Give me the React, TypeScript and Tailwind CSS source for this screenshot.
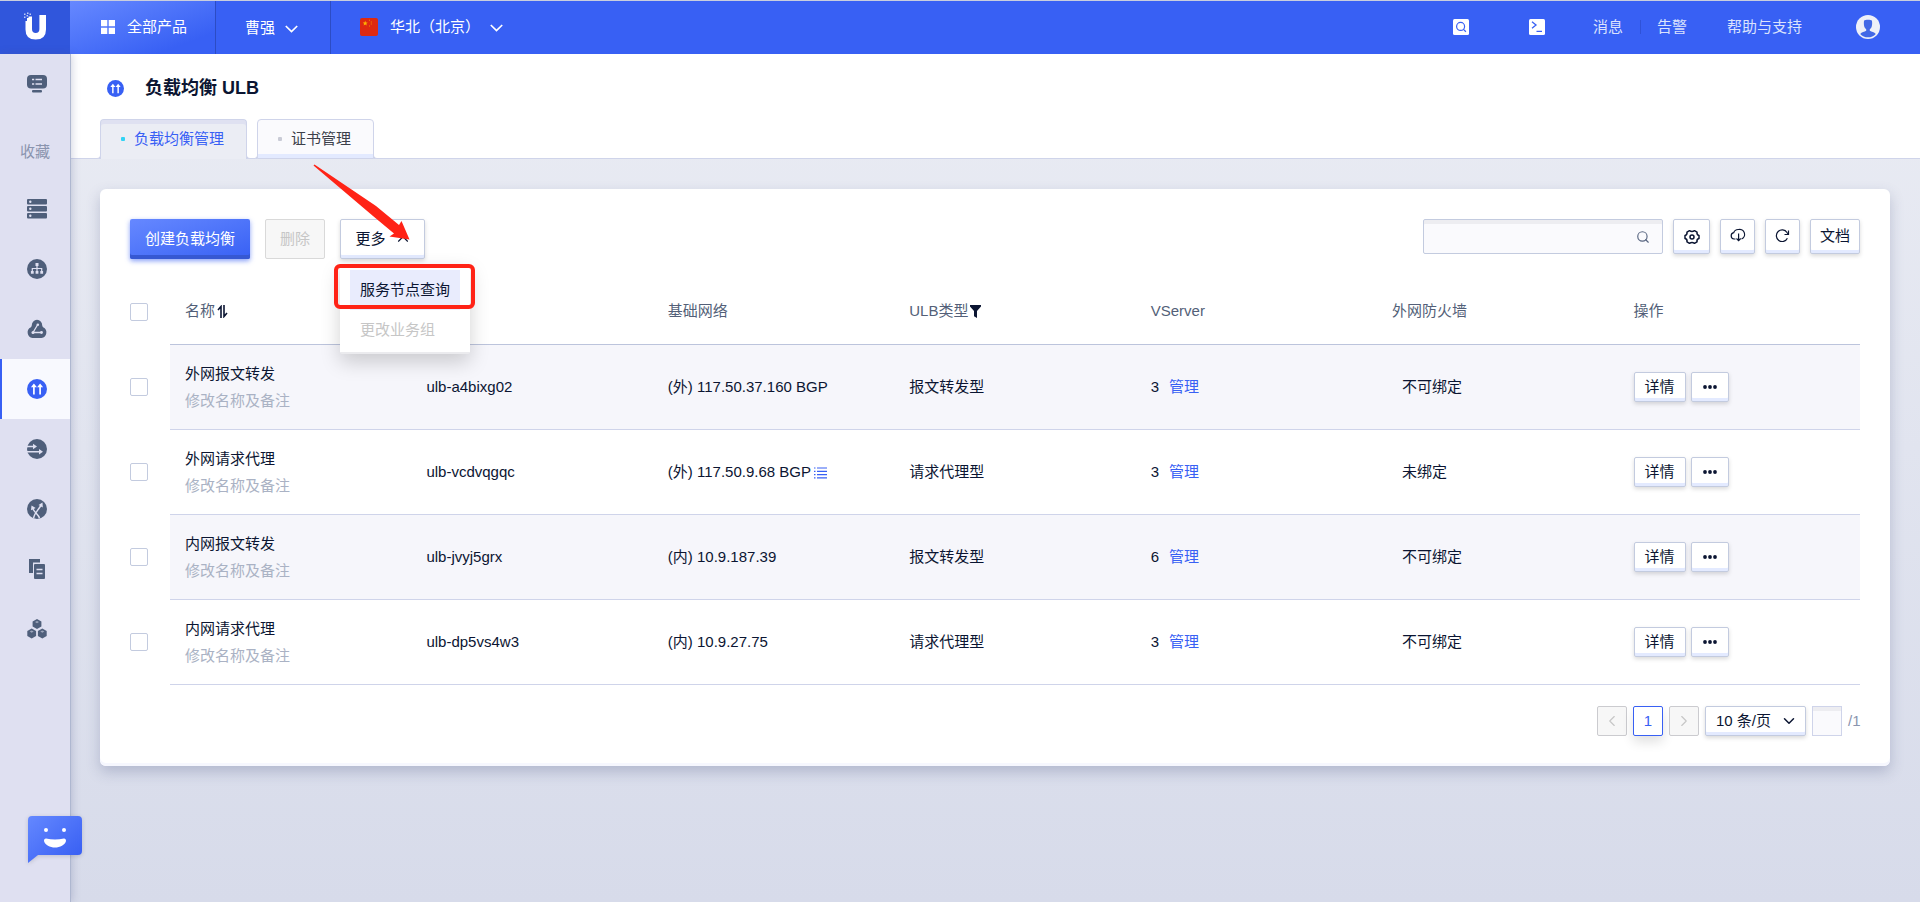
import { useState } from 'react';
import type { ReactNode } from 'react';
import { ChevronDown, ChevronLeft, ChevronRight, ChevronUp, Search } from 'lucide-react';
import clsx from 'clsx';

type Row = {
  id: string;
  name: string;
  network: string;
  hasList?: boolean;
  type: string;
  vserver: number;
  firewall: string;
};

const rows: Row[] = [
  { id: 'ulb-a4bixg02', name: '外网报文转发', network: '(外) 117.50.37.160 BGP', type: '报文转发型', vserver: 3, firewall: '不可绑定' },
  { id: 'ulb-vcdvqgqc', name: '外网请求代理', network: '(外) 117.50.9.68 BGP', hasList: true, type: '请求代理型', vserver: 3, firewall: '未绑定' },
  { id: 'ulb-jvyj5grx', name: '内网报文转发', network: '(内) 10.9.187.39', type: '报文转发型', vserver: 6, firewall: '不可绑定' },
  { id: 'ulb-dp5vs4w3', name: '内网请求代理', network: '(内) 10.9.27.75', type: '请求代理型', vserver: 3, firewall: '不可绑定' },
];

export default function App() {
  return (
    <div className="flex min-h-screen flex-col bg-linear-to-b from-[#ebedf4] to-[#d7dbea] font-['Liberation_Sans','Noto_Sans_CJK_SC',sans-serif] text-[15px] leading-[22px] text-[#0b1532]">
      <TopBar />
      <div className="flex flex-1">
        <Sidebar />
        <main className="min-w-0 flex-1">
          <PageHeader />
          <section className="mx-[30px] mt-[30px] mb-8 rounded-md bg-white p-[30px] shadow-[inset_0_-3px_0_#f6f7fe,0_6px_14px_rgba(60,70,120,0.25)]">
            <Toolbar />
            <UlbTable />
            <Pagination />
          </section>
        </main>
      </div>
    </div>
  );
}

/* ---------- top bar ---------- */

function TopBar() {
  return (
    <header className="flex h-[54px] border-t border-[#c9cede] bg-[#3860f4] text-white">
      <a href="#home" aria-label="首页" className="flex w-[70px] items-center justify-center bg-[#3056dc] pb-1">
        <Logo />
      </a>
      <button className="flex w-[146px] items-center gap-3 border-r border-[#2c4cc4] bg-linear-to-br from-[#6688ff] to-[#3860f4] to-80% pb-0.5 pl-[31px]">
        <svg width="14" height="14" viewBox="0 0 14 14" fill="currentColor">
          <path d="M0 0h6.3v6.3H0zM7.7 0H14v6.3H7.7zM0 7.7h6.3V14H0zM7.7 7.7H14V14H7.7z" />
        </svg>
        全部产品
      </button>
      <button className="flex w-[115px] items-center gap-2.5 border-r border-[#2c4cc4] pl-[29px]">
        曹强
        <Caret />
      </button>
      <button className="flex items-center pb-0.5 pl-[29px]">
        <Flag />
        <span className="mr-2.5 ml-3">华北（北京）</span>
        <Caret />
      </button>

      <div className="ml-auto flex items-center pr-10 pb-0.5">
        <button aria-label="搜索" className="mr-[60px]">
          <svg width="16" height="16" viewBox="0 0 16 16">
            <rect width="16" height="16" rx="1.5" fill="#fff" />
            <circle cx="7.6" cy="7.4" r="4" fill="none" stroke="#3860f4" strokeWidth="1.2" />
            <path d="M10.5 10.4l2.4 2.3" stroke="#3860f4" strokeWidth="1.2" />
          </svg>
        </button>
        <button aria-label="终端" className="mr-12">
          <svg width="16" height="16" viewBox="0 0 16 16">
            <rect width="16" height="16" rx="1.5" fill="#fff" />
            <path d="M3 2.8l4 3.2-4 3.2M7.5 12.3h5.500" fill="none" stroke="#3860f4" strokeWidth="1.3" />
          </svg>
        </button>
        <nav className="flex items-center text-[#dbe2fd]">
          <a href="#messages" className="pr-[17px]">消息</a>
          <span className="h-3.5 w-px bg-[#2f52d8]" />
          <a href="#alarms" className="pl-4">告警</a>
          <a href="#help" className="ml-10">帮助与支持</a>
        </nav>
        <button aria-label="账号" className="ml-[54px]">
          <svg width="24" height="24" viewBox="0 0 24 24">
            <circle cx="12" cy="12" r="12" fill="#eef0f8" />
            <path d="M8.2 5.6C9 4.600 15 4.600 15.800 5.600c.5.600.5 5.200-.3 6.600-.5.900-1.300 1.600-1.700 2.100v1.500c1.800 1 4.500 1.400 6 3.100a10.600 10.600 0 0 1-15.600 0c1.500-1.700 4.200-2.100 6-3.100v-1.500c-.4-.5-1.200-1.200-1.700-2.100-.8-1.400-.8-6-.3-6.600z" fill="#4268e6" />
          </svg>
        </button>
      </div>
    </header>
  );
}

function Caret() {
  return (
    <svg width="13" height="8" viewBox="0 0 13 8" fill="none" stroke="currentColor" strokeWidth="1.700" className="mt-0.5">
      <path d="M.8 1l5.700 5.500L12.200 1" />
    </svg>
  );
}

function Logo() {
  return (
    <svg width="24" height="28" viewBox="0 0 24 28" fill="#fff">
      <path d="M2.500 9H4V6h1.500V4.500H9V17q0 4 3.700 4t3.700-4V3H23v14.500q0 10-10.300 10T2.500 17.500z" />
      <path d="M1 1.500h1.500V3H1zM4 .5h1.500V2H4zM1 4.500h1.500V6H1zM3.500 3H5v1.500H3.500zM6.500 1.500H8V3H6.500z" opacity=".7" />
    </svg>
  );
}

function Flag() {
  return (
    <svg width="18" height="18" viewBox="0 0 18 18">
      <rect width="18" height="18" rx="2" fill="#de2910" />
      <path d="M5.200 2.800l.7 1.700 1.800.1-1.400 1.100.5 1.800-1.600-1-1.600 1 .5-1.800-1.400-1.100 1.800-.1z" fill="#ffb400" />
      <path d="M9 1.800h1v1H9zM10.800 3.400h1v1h-1zM10.800 5.600h1v1h-1zM9 7.400h1v1H9z" fill="#f28a00" />
    </svg>
  );
}

/* ---------- sidebar ---------- */

function Sidebar() {
  return (
    <aside className="relative z-10 w-[70px] shrink-0 bg-[#dfe0f1] text-[#4f5f7b] shadow-[1px_0_0_#aeb7d0,2px_0_8px_rgba(70,80,130,0.25)]">
      <SideItem label="控制台"><ConsoleIcon /></SideItem>
      <p className="flex h-[65px] items-center justify-center pt-2.5 text-[#8a94ae]">收藏</p>
      <SideItem label="云主机"><ServerIcon /></SideItem>
      <SideItem label="私有网络"><TreeIcon /></SideItem>
      <SideItem label="基础网络"><TriangleIcon /></SideItem>
      <SideItem label="负载均衡" active><BalanceIcon size={20} /></SideItem>
      <SideItem label="弹性网络"><ForwardIcon /></SideItem>
      <SideItem label="流量分发"><SplitIcon /></SideItem>
      <SideItem label="镜像"><CopyIcon /></SideItem>
      <SideItem label="集群"><CubesIcon /></SideItem>

      <button aria-label="在线客服" className="absolute top-[761px] left-[28px]">
        <svg width="54" height="49" viewBox="0 0 54 49" className="drop-shadow-sm">
          <defs>
            <linearGradient id="chat" x1="0" y1="0" x2="1" y2="1">
              <stop offset="0" stopColor="#6488ff" />
              <stop offset="1" stopColor="#355cf2" />
            </linearGradient>
          </defs>
          <path d="M4 1h46a4 4 0 0 1 4 4v31a4 4 0 0 1-4 4H10L0 48V5a4 4 0 0 1 4-4z" fill="url(#chat)" />
          <circle cx="18" cy="15" r="2" fill="#fff" />
          <circle cx="36" cy="15" r="2" fill="#fff" />
          <path d="M18 23.500q9 2 18 0c1.500 0 2 1 2 2.500-1 4-6 6.500-11 6.500S17 30 16 26c0-1.500.5-2.500 2-2.500z" fill="#fff" />
        </svg>
      </button>
    </aside>
  );
}

function SideItem({ label, active, children }: { label: string; active?: boolean; children: ReactNode }) {
  return (
    <a href="#product" aria-label={label}
      className={clsx('flex h-[60px] items-center justify-center border-l-2 pl-0.5', active ? 'border-[#3860f4] bg-[#f8f9fe] text-[#3860f4]' : 'border-transparent')}>
      {children}
    </a>
  );
}

function ConsoleIcon() {
  return (
    <svg width="20" height="18" viewBox="0 0 20 18" fill="currentColor">
      <rect width="20" height="13.500" rx="4" />
      <rect x="5" y="15" width="10" height="2.500" rx="1" />
      <path d="M5 4.500h2.200M5 9h2.200M8.500 4.500H15M8.500 9H15" stroke="#dfe0f1" strokeWidth="1.600" />
    </svg>
  );
}

function ServerIcon() {
  return (
    <svg width="20" height="20" viewBox="0 0 20 20">
      {[0, 7, 14].map((y) => (
        <g key={y}>
          <rect y={y} width="20" height="5.500" rx="1" fill="currentColor" />
          <circle cx="3.300" cy={y + 2.700} r="1.200" fill="#dfe0f1" />
        </g>
      ))}
    </svg>
  );
}

function TreeIcon() {
  return (
    <svg width="20" height="20" viewBox="0 0 20 20">
      <circle cx="10" cy="10" r="10" fill="currentColor" />
      <path d="M10 6v7M5.300 13V9.500h9.400V13" fill="none" stroke="#dfe0f1" strokeWidth="1.200" />
      <path d="M8.500 4h3v3h-3zM3.900 12h2.800v2.800H3.900zM8.600 12h2.800v2.800H8.600zM13.300 12h2.800v2.800h-2.800z" fill="#dfe0f1" />
    </svg>
  );
}

function TriangleIcon() {
  return (
    <svg width="20" height="20" viewBox="0 0 20 20">
      <path d="M10 .8a5.300 5.300 0 0 1 5.200 5.400c0 .8.300 1.400.9 2A5.700 5.700 0 0 1 14.500 19h-9A5.700 5.700 0 0 1 3.900 8.200c.6-.6.9-1.200.9-2A5.300 5.300 0 0 1 10 .8z" fill="currentColor" />
      <path d="M10.800 5.500L6 13.500h8.500" fill="none" stroke="#dfe0f1" strokeWidth="1.300" />
      <circle cx="10.800" cy="5.800" r="1.300" fill="#dfe0f1" />
      <circle cx="6" cy="13.500" r="1.500" fill="#dfe0f1" />
      <circle cx="14.500" cy="13.500" r="1.400" fill="#dfe0f1" />
    </svg>
  );
}

function BalanceIcon({ size }: { size: number }) {
  return (
    <svg width={size} height={size} viewBox="0 0 20 20">
      <circle cx="10" cy="10" r="10" fill="#3860f4" />
      <path d="M6.900 15.500V6.500M13.100 15.500V6.500" stroke="#fff" strokeWidth="1.700" />
      <path d="M6.900 4.500l3 3.800h-6zM13.100 4.500l3 3.800h-6z" fill="#fff" />
    </svg>
  );
}

function ForwardIcon() {
  return (
    <svg width="20" height="20" viewBox="0 0 20 20">
      <circle cx="10" cy="10" r="10" fill="currentColor" />
      <path d="M0 7.500h7M0 12.800h13" stroke="#dfe0f1" strokeWidth="1.500" />
      <path d="M6 4.700l4 2.800-4 2.800zM12 10l4 2.800-4 2.800z" fill="#dfe0f1" />
    </svg>
  );
}

function SplitIcon() {
  return (
    <svg width="20" height="20" viewBox="0 0 20 20">
      <circle cx="10" cy="10" r="10" fill="currentColor" />
      <path d="M6.500 19c1-5 4-7 7.500-12.500M12.500 19c-1.200-3.500-4.500-5-6.500-9" fill="none" stroke="#dfe0f1" strokeWidth="1.500" />
      <path d="M15.500 3.500l.3 5-4.300-2.500zM4.500 6.500l4.200 2.600-4.700 2.200z" fill="#dfe0f1" />
    </svg>
  );
}

function CopyIcon() {
  return (
    <svg width="20" height="20" viewBox="0 0 20 20">
      <path d="M2 0h11v3.500H6V14H2z" fill="currentColor" />
      <rect x="7" y="5" width="11" height="15" rx="1" fill="currentColor" />
      <path d="M9.500 10.500h6M9.500 14.500h6" stroke="#dfe0f1" strokeWidth="1.400" />
    </svg>
  );
}

function CubesIcon() {
  return (
    <svg width="20" height="20" viewBox="0 0 20 20">
      {[[10, 5], [4.700, 14.500], [15.300, 14.500]].map(([x, y]) => (
        <g key={`${x}-${y}`} transform={`translate(${x} ${y})`}>
          <path d="M0-5l4.400 2.500v5L0 5l-4.400-2.500v-5z" fill="currentColor" />
          <path d="M0-3l2 1.100L0-.8l-2-1.100z" fill="#dfe0f1" opacity=".55" />
        </g>
      ))}
    </svg>
  );
}

/* ---------- page header ---------- */

function PageHeader() {
  return (
    <div className="border-b border-[#cfd4ea] bg-white px-[30px] pt-[19px]">
      <h1 className="flex h-[30px] items-center gap-[21px] pl-[7px] text-lg font-bold">
        <BalanceIcon size={17} />
        负载均衡 ULB
      </h1>
      <nav className="mt-4 -mb-px flex gap-2.5">
        <Tab label="负载均衡管理" active />
        <Tab label="证书管理" />
      </nav>
    </div>
  );
}

function Tab({ label, active }: { label: string; active?: boolean }) {
  return (
    <button
      className={clsx(
        'relative flex h-10 items-center gap-[9px] rounded-t-sm border border-[#cfd4ea] pr-[22px] pl-5',
        active
          ? 'border-b-0 bg-[#ebedf4] pb-px text-[#3860f4] shadow-[inset_0_4px_0_#dfe1f1]'
          : 'bg-[#fafafd] text-[#3c3f4a] shadow-[inset_0_-4px_0_#e3eaff]',
      )}
    >
      <span className={clsx('absolute -left-[5px] size-[5px] rounded-br-sm border-r border-b border-[#cfd4ea] bg-white', active ? 'bottom-0' : '-bottom-px')} />
      <span className={clsx('absolute -right-[5px] size-[5px] rounded-bl-sm border-b border-l border-[#cfd4ea] bg-white', active ? 'bottom-0' : '-bottom-px')} />
      <span className={clsx('size-1 rounded-[1px]', active ? 'bg-[#31d3f5]' : 'bg-[#c9cbd6]')} />
      {label}
    </button>
  );
}

/* ---------- toolbar ---------- */

const raised = 'flex items-center justify-center rounded-xs border border-[#c3cbdf] bg-white shadow-[inset_0_-3px_0_#e3eaff,0_2px_4px_rgba(0,0,0,0.15)]';

function Toolbar() {
  return (
    <div className="flex items-start">
      <button className="h-10 rounded-xs bg-linear-to-br from-[#6688ff] to-[#3860f4] px-[15px] text-white shadow-[inset_0_-4px_0_#3658d2,0_2px_5px_rgba(56,96,244,0.6)]">
        创建负载均衡
      </button>
      <button disabled className="ml-[15px] h-10 rounded-xs border border-[#d9d9d9] bg-[#f7f7f7] px-3.5 text-[#c6c6c6]">
        删除
      </button>
      <MoreMenu />

      <div className="ml-auto flex gap-2.5">
        <label className="flex h-[35px] w-60 items-center rounded-xs border border-[#c3cbdf] bg-[#fafafd] pr-3 pl-3 shadow-[inset_0_4px_0_#ededf1]">
          <input aria-label="搜索" className="min-w-0 flex-1 bg-transparent outline-none" />
          <Search size={14} strokeWidth={2} className="text-[#5a6782]" />
        </label>
        <button aria-label="设置" className={clsx(raised, 'h-[35px] w-[37px]')}><GearIcon /></button>
        <button aria-label="导出" className={clsx(raised, 'h-[35px] w-[35px]')}><CloudIcon /></button>
        <button aria-label="刷新" className={clsx(raised, 'h-[35px] w-[35px]')}><RefreshIcon /></button>
        <button className={clsx(raised, 'h-[35px] w-[50px] pb-0.5')}>文档</button>
      </div>
    </div>
  );
}

function MoreMenu() {
  const [open, setOpen] = useState(true);

  return (
    <div className="relative ml-[15px]">
      <button onClick={() => setOpen(!open)} className={clsx(raised, 'h-10 w-[85px] gap-2 pl-0.5')}>
        更多
        <ChevronUp size={18} strokeWidth={1.500} />
      </button>
      {open && (
        <div className="absolute top-[45px] left-0 z-20 w-[130px] rounded-xs border-b-2 border-[#ebebee] bg-white px-2.5 pt-1.5 pb-0.5 shadow-[0_8px_20px_rgba(0,0,0,0.18)]">
          <button className="block h-10 w-full bg-[#e9ecfd] pl-2.5 text-left">服务节点查询</button>
          <button disabled className="block h-10 w-full pl-2.5 text-left text-[#c6c6c6]">更改业务组</button>
        </div>
      )}
      {/* callout: box round the first entry and an arrow to the button */}
      <div className="pointer-events-none absolute top-[45px] -left-1.5 z-30 h-[45px] w-[141px] rounded-md border-4 border-[#ff2316]" />
      <svg width="100" height="80" viewBox="0 0 100 80" className="pointer-events-none absolute -top-14 -left-7 z-30" fill="#ff2316">
        <path d="M1.500 2.500L2.500 1.500 64 43 87 62 89.500 58 97.500 76.500 77.500 73.500 82 70.500 61 53z" />
      </svg>
    </div>
  );
}

function GearIcon() {
  return (
    <svg width="16" height="16" viewBox="0 0 16 16" fill="none" stroke="currentColor" strokeWidth="1.500" strokeLinejoin="round">
      <path d="M15 6.500v3Q12.600 10 13 12.800L10.500 14.300Q8 12.600 5.500 14.300L3 12.800Q3.400 10 1 9.500V6.500Q3.400 6 3 3.200L5.500 1.700Q8 3.400 10.500 1.700L13 3.200Q12.600 6 15 6.500z" />
      <circle cx="8" cy="8" r="2" />
    </svg>
  );
}

function CloudIcon() {
  return (
    <svg width="16" height="15" viewBox="0 0 16 15" fill="none" stroke="currentColor" strokeWidth="1.200" className="mb-0.5">
      <path d="M5.500 11H4a3.200 3.200 0 0 1-.3-6.300A4.800 4.800 0 0 1 8.500 1.500 5 5 0 0 1 11.500 11" />
      <path d="M8.600 5.500v7M6.500 10.500l2.100 2.200 2.100-2.200" />
    </svg>
  );
}

function RefreshIcon() {
  return (
    <svg width="15" height="14" viewBox="0 0 15 14" fill="none" stroke="currentColor" strokeWidth="1.200" className="mb-0.5">
      <path d="M12.400 9.200A5.800 5.800 0 1 1 12 3.500l1 1.300" />
      <path d="M13.500 1.500v4H9.500" />
    </svg>
  );
}

/* ---------- table ---------- */

function UlbTable() {
  return (
    <table className="mt-5 w-full table-fixed border-collapse text-left">
      <thead>
        <tr className="h-[65px]">
          <th className="w-10 p-0 align-middle"><Checkbox label="全选" /></th>
          <HeadCell>名称<SortIcon /></HeadCell>
          <HeadCell />
          <HeadCell>基础网络</HeadCell>
          <HeadCell>ULB类型<FilterIcon /></HeadCell>
          <HeadCell>VServer</HeadCell>
          <HeadCell>外网防火墙</HeadCell>
          <HeadCell>操作</HeadCell>
        </tr>
      </thead>
      <tbody>
        {rows.map((row, i) => (
          <UlbRow key={row.id} row={row} striped={i % 2 === 0} />
        ))}
      </tbody>
    </table>
  );
}

function HeadCell({ children }: { children?: ReactNode }) {
  return (
    <th className="border-b border-[#bcc4dc] px-[15px] font-normal text-[#535f78]">
      <span className="flex items-center">{children}</span>
    </th>
  );
}

function UlbRow({ row, striped }: { row: Row; striped: boolean }) {
  const cell = clsx('border-b border-[#cfd4ea] px-[15px]', striped && 'bg-[#f6f6fb]');

  return (
    <tr className="h-[85px]">
      <td className="p-0 align-middle"><Checkbox label={row.name} /></td>
      <td className={cell}>
        <div className="leading-[27px]">{row.name}</div>
        <button className="block leading-[27px] text-[#aab2c4]">修改名称及备注</button>
      </td>
      <td className={cell}>{row.id}</td>
      <td className={cell}>
        <span className="flex items-center gap-[3px]">
          {row.network}
          {row.hasList && <ListIcon />}
        </span>
      </td>
      <td className={cell}>{row.type}</td>
      <td className={cell}>
        {row.vserver}
        <a href="#vserver" className="ml-2.5 text-[#3860f4]">管理</a>
      </td>
      <td className={clsx(cell, 'pl-[25px]')}>{row.firewall}</td>
      <td className={cell}>
        <div className="flex gap-[5px]">
          <button className={clsx(raised, 'h-[30px] w-[52px]')}>详情</button>
          <button aria-label="更多操作" className={clsx(raised, 'h-[30px] w-[38px]')}>
            <svg width="14" height="4" viewBox="0 0 14 4" fill="currentColor">
              <circle cx="2" cy="2" r="1.900" />
              <circle cx="7" cy="2" r="1.900" />
              <circle cx="12" cy="2" r="1.900" />
            </svg>
          </button>
        </div>
      </td>
    </tr>
  );
}

function Checkbox({ label }: { label: string }) {
  return (
    <input type="checkbox" aria-label={label}
      className="block size-[18px] appearance-none rounded-xs border border-[#c3cbdf] bg-white checked:bg-[#3860f4]" />
  );
}

function SortIcon() {
  return (
    <svg width="11" height="13" viewBox="0 0 11 13" fill="none" stroke="#0b1532" strokeWidth="1.600" className="ml-0.5">
      <path d="M4 13V1.500L1 5M7 0v11.500L10 8" />
    </svg>
  );
}

function FilterIcon() {
  return (
    <svg width="11" height="13" viewBox="0 0 11 13" fill="#0b1532" className="ml-0.5">
      <path d="M0 0h11v1.500L7 6V13L4 11.200V6L0 1.500z" />
    </svg>
  );
}

function ListIcon() {
  return (
    <svg width="13" height="12" viewBox="0 0 13 12" stroke="#3860f4" strokeWidth="1.200" className="mt-0.5">
      <path d="M0 1h1.500M3 1h10M0 4.300h1.500M3 4.300h10M0 7.600h1.500M3 7.600h10M0 10.900h1.500M3 10.900h10" />
    </svg>
  );
}

/* ---------- pagination ---------- */

function Pagination() {
  const disabled = 'flex size-[30px] items-center justify-center rounded-xs border border-[#cbcbcf] bg-[#f7f7f7] text-[#c6c6c6]';

  return (
    <div className="mt-[21px] flex items-center justify-end gap-1.5">
      <button disabled aria-label="上一页" className={disabled}><ChevronLeft size={18} strokeWidth={1.500} /></button>
      <button className="size-[30px] rounded-xs border border-[#3860f4] bg-white text-[#3860f4] shadow-[0_6px_12px_rgba(0,0,0,0.12)]">1</button>
      <button disabled aria-label="下一页" className={disabled}><ChevronRight size={18} strokeWidth={1.500} /></button>
      <div className="relative">
        <select aria-label="每页条数" className={clsx(raised, 'h-[30px] w-[101px] appearance-none pl-2.5')}>
          <option>10 条/页</option>
          <option>20 条/页</option>
        </select>
        <ChevronDown size={18} strokeWidth={2} className="pointer-events-none absolute top-1.5 right-2" />
      </div>
      <input aria-label="页码" className="size-[30px] border border-[#cfd4ea] bg-[#fafafd] text-center shadow-[inset_0_4px_0_#ededf1] outline-none" />
      <span className="w-3 text-[#8a94ae]">/1</span>
    </div>
  );
}
